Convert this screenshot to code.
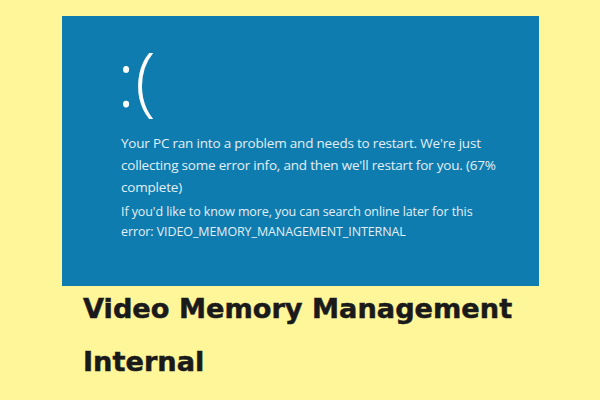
import React from "react";

export default function App() {
  return (
    <div className="w-[600px] h-[400px] bg-[#fff699] overflow-hidden">
      <div className="ml-[62px] pt-[16px]">
        <div className="w-[477px] h-[270px] bg-[#0f7cb0] pl-[59px] pt-[26px] text-[#e3eff6]" style={{ fontFamily: '"Open Sans", "Noto Sans", sans-serif' }}>
          <div className="-ml-[4px] text-[76px] leading-[72px] h-[72px] font-light text-white">:(</div>
          <div className="mt-[18px] text-[13.5px] leading-[22px] whitespace-nowrap tracking-[-0.2px]">
            Your PC ran into a problem and needs to restart. We're just<br />
            collecting some error info, and then we'll restart for you. (67%<br />
            complete)
          </div>
          <div className="mt-[4px] text-[12.5px] leading-[20px] whitespace-nowrap tracking-[-0.1px]">
            If you'd like to know more, you can search online later for this<br />
            error: VIDEO_MEMORY_MANAGEMENT_INTERNAL
          </div>
        </div>
        <div className="-mt-[4px] pl-[21px] text-[27.2px] leading-[53px] font-bold text-[#1a1a1a] [-webkit-text-stroke:0.5px_#1a1a1a]" style={{ fontFamily: '"DejaVu Sans", sans-serif' }}>
          Video Memory Management<br />Internal
        </div>
      </div>
    </div>
  );
}
